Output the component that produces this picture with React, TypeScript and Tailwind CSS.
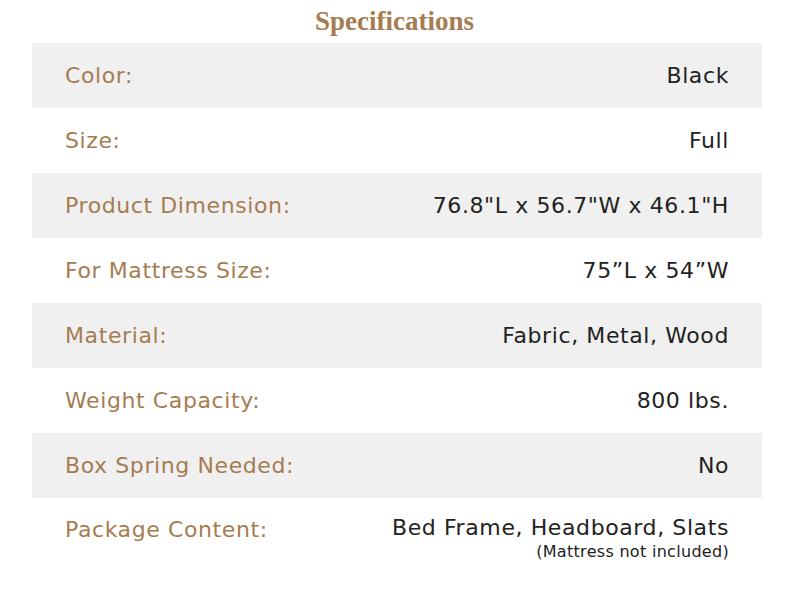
const specs: { label: string; value: string; note?: string }[] = [
  { label: "Color:", value: "Black" },
  { label: "Size:", value: "Full" },
  { label: "Product Dimension:", value: '76.8"L x 56.7"W x 46.1"H' },
  { label: "For Mattress Size:", value: "75\u201DL x 54\u201DW" },
  { label: "Material:", value: "Fabric, Metal, Wood" },
  { label: "Weight Capacity:", value: "800 lbs." },
  { label: "Box Spring Needed:", value: "No" },
  { label: "Package Content:", value: "Bed Frame, Headboard, Slats", note: "(Mattress not included)" },
];

export default function App() {
  return (
    <div className="w-[800px] h-[600px] bg-white overflow-hidden">
      <h1 className="h-[43px] pt-[3px] pr-[11px] text-center text-[27px] font-bold text-[#a67c52] font-['Liberation_Serif',serif] leading-[36px]">
        Specifications
      </h1>
      <div className="mx-[32px] w-[730px] font-['DejaVu_Sans',sans-serif] tracking-[0.6px]">
        {specs.map((s, i) => (
          <div
            key={s.label}
            className={
              (i % 2 === 0 ? "bg-[#f0f0f0] " : "bg-white ") +
              (s.note
                ? "flex justify-between items-start h-[68px] pt-[15px] px-[33px]"
                : "flex justify-between items-center h-[65px] px-[33px]")
            }
          >
            <span className="text-[22px] text-[#a67c52]">{s.label}</span>
            <div className="text-right">
              <div className="text-[22px] text-[#222222] leading-[30px]">{s.value}</div>
              {s.note && <div className="text-[16px] text-[#222222] leading-[17px] tracking-[0.3px]">{s.note}</div>}
            </div>
          </div>
        ))}
      </div>
    </div>
  );
}
